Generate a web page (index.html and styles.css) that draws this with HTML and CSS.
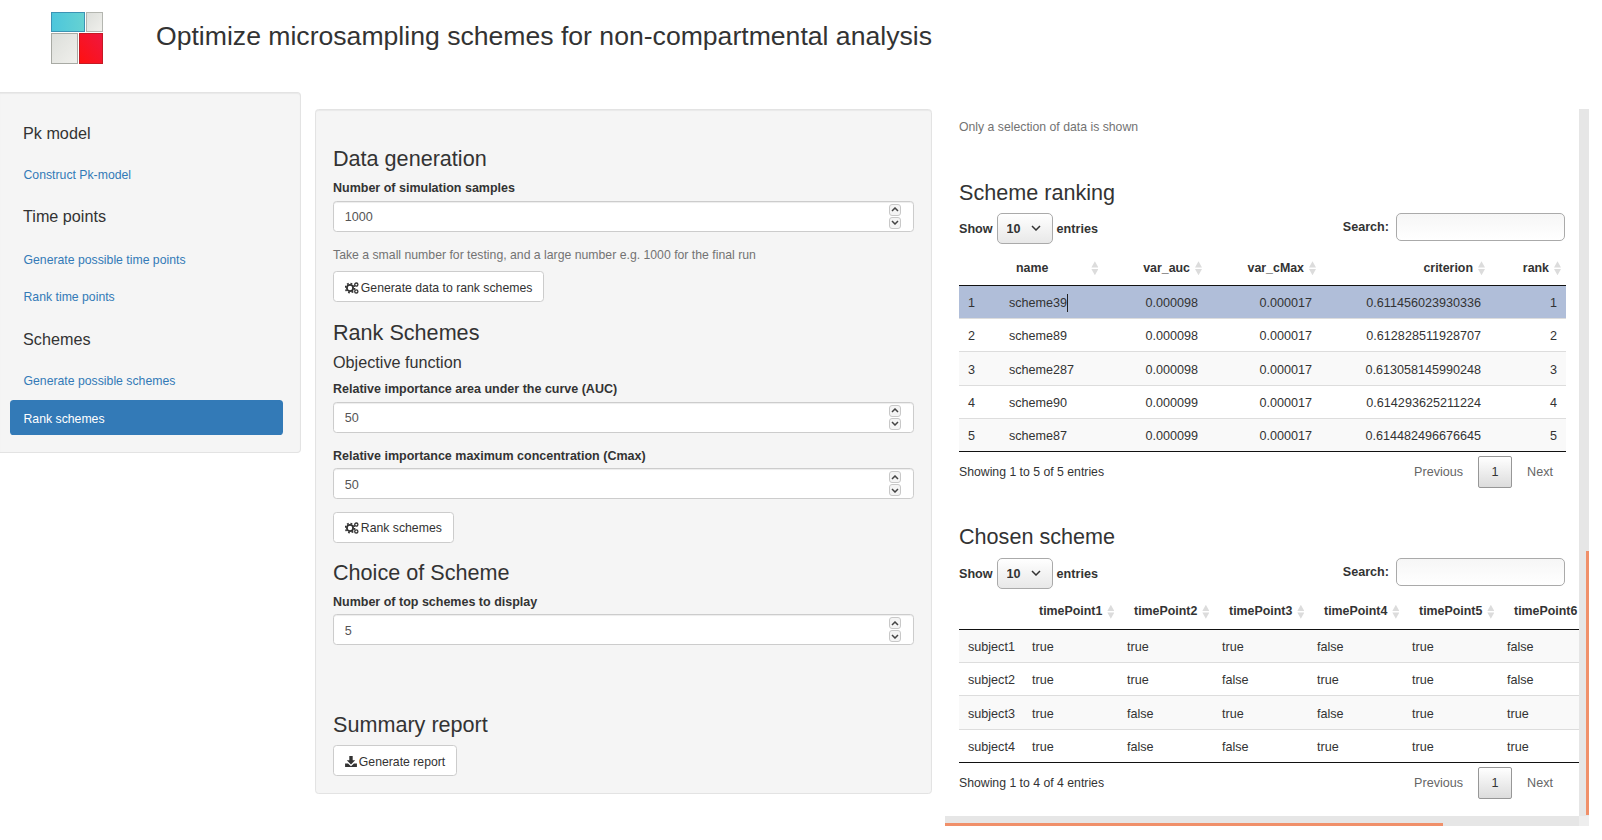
FILE: index.html
```html
<!DOCTYPE html>
<html lang="en">
<head>
    <meta charset="UTF-8">
    <title>Optimize microsampling schemes</title>
    <link rel="stylesheet" href="styles.css">
</head>
<body>
    <!-- Title -->
    <header class="page-header">
        <svg class="logo" width="52" height="52" viewBox="0 0 52 52">
            <defs>
                <linearGradient id="cyan" x1="0" y1="0" x2="1" y2="0"><stop offset="0" stop-color="#4cc6dc"/><stop offset="1" stop-color="#66d2d2"/></linearGradient>
                <linearGradient id="red" x1="0" y1="1" x2="1" y2="0"><stop offset="0" stop-color="#ff1010"/><stop offset="1" stop-color="#ee1840"/></linearGradient>
                <linearGradient id="pale" x1="0" y1="0" x2="1" y2="1"><stop offset="0" stop-color="#dcdeda"/><stop offset="1" stop-color="#f0f0ec"/></linearGradient>
            </defs>
            <rect x="0.5" y="0.5" width="33" height="19" fill="url(#cyan)" stroke="#3c93b4"/>
            <rect x="35.5" y="0.5" width="16" height="19" fill="url(#pale)" stroke="#b4b6b0"/>
            <rect x="0.5" y="21.5" width="26" height="30" fill="url(#pale)" stroke="#a8aaa4"/>
            <rect x="28.5" y="21.5" width="23" height="30" fill="url(#red)" stroke="#c41a24"/>
        </svg>
        <h2 class="page-title">Optimize microsampling schemes for non-compartmental analysis</h2>
    </header>

    <div class="columns">
        <!-- Navigation -->
        <nav class="sidebar">
            <h4 class="nav-title">Pk model</h4>
            <a class="nav-link" href="#">Construct Pk-model</a>
            <h4 class="nav-title middle">Time points</h4>
            <a class="nav-link" href="#">Generate possible time points</a>
            <a class="nav-link" href="#">Rank time points</a>
            <h4 class="nav-title last">Schemes</h4>
            <a class="nav-link" href="#">Generate possible schemes</a>
            <a class="nav-link active" href="#">Rank schemes</a>
        </nav>

        <!-- Settings -->
        <section class="panel">
            <h3 class="first">Data generation</h3>
            <label class="field-label">Number of simulation samples</label>
            <div class="number-field">
                <input type="number" value="1000">
                <div class="spinner">
                    <span class="spin"><svg width="8" height="5" viewBox="0 0 8 5"><path d="M1 4l3-3 3 3" fill="none" stroke="#444" stroke-width="1.5"/></svg></span>
                    <span class="spin"><svg width="8" height="5" viewBox="0 0 8 5"><path d="M1 1l3 3 3-3" fill="none" stroke="#444" stroke-width="1.5"/></svg></span>
                </div>
            </div>
            <p class="help">Take a small number for testing, and a large number e.g. 1000 for the final run</p>
            <button class="btn">
                <svg width="14" height="12" viewBox="0 0 14 12"><circle cx="5" cy="6" r="3.1" fill="none" stroke="#333" stroke-width="1.8"/><circle cx="5" cy="6" r="4.6" fill="none" stroke="#333" stroke-width="1.6" stroke-dasharray="1.8 1.8"/><circle cx="11.3" cy="2.6" r="1.6" fill="none" stroke="#333" stroke-width="1.3"/><circle cx="11.3" cy="9.4" r="1.6" fill="none" stroke="#333" stroke-width="1.3"/></svg>
                Generate data to rank schemes
            </button>

            <h3 class="rank">Rank Schemes</h3>
            <h4 class="sub-title">Objective function</h4>
            <label class="field-label">Relative importance area under the curve (AUC)</label>
            <div class="number-field">
                <input type="number" value="50">
                <div class="spinner">
                    <span class="spin"><svg width="8" height="5" viewBox="0 0 8 5"><path d="M1 4l3-3 3 3" fill="none" stroke="#444" stroke-width="1.5"/></svg></span>
                    <span class="spin"><svg width="8" height="5" viewBox="0 0 8 5"><path d="M1 1l3 3 3-3" fill="none" stroke="#444" stroke-width="1.5"/></svg></span>
                </div>
            </div>
            <label class="field-label next">Relative importance maximum concentration (Cmax)</label>
            <div class="number-field">
                <input type="number" value="50">
                <div class="spinner">
                    <span class="spin"><svg width="8" height="5" viewBox="0 0 8 5"><path d="M1 4l3-3 3 3" fill="none" stroke="#444" stroke-width="1.5"/></svg></span>
                    <span class="spin"><svg width="8" height="5" viewBox="0 0 8 5"><path d="M1 1l3 3 3-3" fill="none" stroke="#444" stroke-width="1.5"/></svg></span>
                </div>
            </div>
            <button class="btn after-field">
                <svg width="14" height="12" viewBox="0 0 14 12"><circle cx="5" cy="6" r="3.1" fill="none" stroke="#333" stroke-width="1.8"/><circle cx="5" cy="6" r="4.6" fill="none" stroke="#333" stroke-width="1.6" stroke-dasharray="1.8 1.8"/><circle cx="11.3" cy="2.6" r="1.6" fill="none" stroke="#333" stroke-width="1.3"/><circle cx="11.3" cy="9.4" r="1.6" fill="none" stroke="#333" stroke-width="1.3"/></svg>
                Rank schemes
            </button>

            <h3>Choice of Scheme</h3>
            <label class="field-label">Number of top schemes to display</label>
            <div class="number-field">
                <input type="number" value="5">
                <div class="spinner">
                    <span class="spin"><svg width="8" height="5" viewBox="0 0 8 5"><path d="M1 4l3-3 3 3" fill="none" stroke="#444" stroke-width="1.5"/></svg></span>
                    <span class="spin"><svg width="8" height="5" viewBox="0 0 8 5"><path d="M1 1l3 3 3-3" fill="none" stroke="#444" stroke-width="1.5"/></svg></span>
                </div>
            </div>

            <h3 class="report">Summary report</h3>
            <button class="btn">
                <svg width="12" height="11" viewBox="0 0 14 13"><path d="M5 0h4v5h3L7 10 2 5h3z" fill="#333"/><path d="M0 9h3.5L7 12l3.5-3H14v4H0z" fill="#333"/></svg>
                Generate report
            </button>
        </section>

        <!-- Results -->
        <section class="results">
            <div class="results-inner">
                <p class="help note">Only a selection of data is shown</p>

                <h3 class="table-title">Scheme ranking</h3>
                <div class="table-controls">
                    <div class="length">
                        Show
                        <div class="select-box">
                            <select><option>10</option></select>
                            <svg width="10" height="6" viewBox="0 0 10 6"><path d="M1 1l4 4 4-4" fill="none" stroke="#333" stroke-width="1.5"/></svg>
                        </div>
                        entries
                    </div>
                    <div class="search">Search: <input type="text"></div>
                </div>
                <table class="data-table ranking">
                    <thead>
                        <tr>
                            <th class="c-id"></th>
                            <th class="c-name">name</th>
                            <th class="c-auc num">var_auc</th>
                            <th class="c-cmax num">var_cMax</th>
                            <th class="c-crit num">criterion</th>
                            <th class="c-rank num">rank</th>
                        </tr>
                    </thead>
                    <tbody>
                        <tr class="selected"><td>1</td><td><span class="caret">scheme39</span></td><td class="num">0.000098</td><td class="num">0.000017</td><td class="num">0.611456023930336</td><td class="num">1</td></tr>
                        <tr><td>2</td><td>scheme89</td><td class="num">0.000098</td><td class="num">0.000017</td><td class="num">0.612828511928707</td><td class="num">2</td></tr>
                        <tr class="odd tall"><td>3</td><td>scheme287</td><td class="num">0.000098</td><td class="num">0.000017</td><td class="num">0.613058145990248</td><td class="num">3</td></tr>
                        <tr><td>4</td><td>scheme90</td><td class="num">0.000099</td><td class="num">0.000017</td><td class="num">0.614293625211224</td><td class="num">4</td></tr>
                        <tr class="odd"><td>5</td><td>scheme87</td><td class="num">0.000099</td><td class="num">0.000017</td><td class="num">0.614482496676645</td><td class="num">5</td></tr>
                    </tbody>
                </table>
                <div class="table-footer">
                    <span>Showing 1 to 5 of 5 entries</span>
                    <div class="pager"><span>Previous</span><span class="page-current">1</span><span>Next</span></div>
                </div>

                <h3 class="table-title second">Chosen scheme</h3>
                <div class="table-controls">
                    <div class="length">
                        Show
                        <div class="select-box">
                            <select><option>10</option></select>
                            <svg width="10" height="6" viewBox="0 0 10 6"><path d="M1 1l4 4 4-4" fill="none" stroke="#333" stroke-width="1.5"/></svg>
                        </div>
                        entries
                    </div>
                    <div class="search">Search: <input type="text"></div>
                </div>
                <div class="table-clip">
                    <table class="data-table chosen">
                        <thead>
                            <tr>
                                <th class="c-subject"></th>
                                <th>timePoint1</th>
                                <th>timePoint2</th>
                                <th>timePoint3</th>
                                <th>timePoint4</th>
                                <th>timePoint5</th>
                                <th class="no-sort">timePoint6</th>
                            </tr>
                        </thead>
                        <tbody>
                            <tr class="odd"><td>subject1</td><td>true</td><td>true</td><td>true</td><td>false</td><td>true</td><td>false</td></tr>
                            <tr><td>subject2</td><td>true</td><td>true</td><td>false</td><td>true</td><td>true</td><td>false</td></tr>
                            <tr class="odd tall"><td>subject3</td><td>true</td><td>false</td><td>true</td><td>false</td><td>true</td><td>true</td></tr>
                            <tr><td>subject4</td><td>true</td><td>false</td><td>false</td><td>true</td><td>true</td><td>true</td></tr>
                        </tbody>
                    </table>
                </div>
                <div class="table-footer">
                    <span>Showing 1 to 4 of 4 entries</span>
                    <div class="pager"><span>Previous</span><span class="page-current">1</span><span>Next</span></div>
                </div>
            </div>

            <!-- Scrollbars -->
            <div class="track-v"><div class="thumb-v"></div></div>
            <div class="track-h"><div class="thumb-h"></div></div>
            <div class="track-corner"></div>
        </section>
    </div>
</body>
</html>
```

FILE: styles.css
```css
html, body {
    height: 100%;
}

body {
    margin: 0;
    background: #fff;
    color: #333;
    font-family: "Liberation Sans", Arial, sans-serif;
    font-size: 12.25px;
    line-height: 18px;
    overflow: hidden;
}

/* Header */
.page-header {
    display: flex;
    align-items: flex-start;
    height: 92px;
    padding: 12px 0 0 51px;
    box-sizing: border-box;
}

.page-title {
    margin: 7px 0 0 53px;
    font-size: 26.6px;
    font-weight: 500;
    line-height: 35px;
}

.columns {
    display: flex;
    align-items: flex-start;
}

/* Sidebar */
.sidebar {
    display: flex;
    flex-direction: column;
    width: 301px;
    height: 361px;
    box-sizing: border-box;
    padding: 31px 17px 0 10px;
    background: #f5f5f5;
    border: 1px solid #e3e3e3;
    border-left: 0;
    border-radius: 0 4px 4px 0;
    box-shadow: inset 0 1px 1px rgba(0,0,0,0.05);
}

.nav-title {
    margin: 0 0 15px 13px;
    font-size: 16.2px;
    font-weight: 500;
    line-height: 18px;
}

.nav-link {
    display: block;
    height: 36px;
    box-sizing: border-box;
    padding: 9px 13.5px;
    margin-bottom: 1px;
    color: #337ab7;
    text-decoration: none;
    border-radius: 3.6px;
}

.nav-link + .nav-title.middle {
    margin-top: 13px;
    margin-bottom: 17px;
}

.nav-link + .nav-title.last {
    margin-top: 14px;
}

.nav-link.active {
    height: 35px;
    padding-top: 9.5px;
    background: #337ab7;
    color: #fff;
}

/* Settings panel */
.panel {
    width: 617px;
    height: 685px;
    box-sizing: border-box;
    margin: 17px 0 0 14px;
    padding: 18px 17px;
    background: #f5f5f5;
    border: 1px solid #e3e3e3;
    border-radius: 3.6px;
    box-shadow: inset 0 1px 1px rgba(0,0,0,0.05);
}

h3 {
    margin: 18px 0 8px;
    font-size: 21.6px;
    font-weight: 500;
    line-height: 24px;
}

h3.first {
    margin-top: 19px;
}

h3.rank {
    margin-top: 19px;
}

h3.report {
    margin-top: 68px;
    margin-bottom: 8px;
}

.sub-title {
    margin: 0 0 9px;
    font-size: 16.2px;
    font-weight: 500;
    line-height: 18px;
}

.field-label {
    display: block;
    margin-bottom: 3.5px;
    font-size: 12.5px;
    font-weight: bold;
}

.field-label.next {
    margin-top: 14.5px;
    margin-bottom: 3px;
}

.number-field {
    position: relative;
}

.number-field input {
    display: block;
    width: 100%;
    height: 31px;
    box-sizing: border-box;
    padding: 2px 10.8px 0;
    background: #fff;
    border: 1px solid #ccc;
    border-radius: 3.6px;
    color: #555;
    font: inherit;
    font-size: 12.6px;
    appearance: textfield;
    box-shadow: inset 0 1px 1px rgba(0,0,0,0.075);
}

.spinner {
    position: absolute;
    top: 3px;
    right: 13px;
    display: flex;
    flex-direction: column;
    gap: 1px;
}

.spin {
    display: flex;
    align-items: center;
    justify-content: center;
    width: 12px;
    height: 12px;
    border: 1px solid #c8c8c8;
    border-radius: 3px;
    box-sizing: border-box;
    background: #f4f4f4;
}

.help {
    margin: 14.5px 0 7px;
    color: #737373;
}

.btn {
    display: inline-flex;
    align-items: center;
    gap: 2px;
    height: 31px;
    box-sizing: border-box;
    padding: 2px 10.8px 0;
    background: #fff;
    border: 1px solid #ccc;
    border-radius: 3.6px;
    color: #333;
    font: inherit;
}

.btn.after-field {
    margin-top: 12.5px;
}

/* Results */
.results {
    position: relative;
    width: 644px;
    height: 717px;
    margin: 17px 0 0 13px;
    overflow: hidden;
}

.results-inner {
    width: 620px;
    padding: 9px 0 0 14px;
}

.note {
    margin: 0;
}

.table-title {
    margin: 45px 0 8px;
}

.table-title.second {
    margin: 37px 0 9px;
}

.table-controls {
    display: flex;
    justify-content: space-between;
    align-items: center;
    width: 606px;
    height: 31px;
    margin-bottom: 8px;
    font-size: 12.6px;
    font-weight: bold;
}

.table-controls .length {
    display: flex;
    align-items: center;
    gap: 4px;
}

.select-box {
    position: relative;
    height: 31px;
}

.select-box select {
    width: 56px;
    height: 31px;
    padding: 0 9px;
    appearance: none;
    background: linear-gradient(#fff, #e8e8e8);
    border: 1px solid #aaa;
    border-radius: 5px;
    color: #333;
    font: inherit;
}

.select-box svg {
    position: absolute;
    top: 12px;
    right: 12px;
}

.search {
    display: flex;
    align-items: center;
    gap: 7px;
    margin-top: -3px;
}

.search input {
    width: 169px;
    height: 28px;
    box-sizing: border-box;
    background: linear-gradient(#f6f6f6, #fff);
    border: 1px solid #aaa;
    border-radius: 5px;
}

.data-table {
    border-collapse: separate;
    border-spacing: 0;
    table-layout: fixed;
}

.data-table th {
    height: 34px;
    box-sizing: border-box;
    padding: 0 16px 2px;
    border-bottom: 1px solid #111;
    font-size: 12.4px;
    font-weight: bold;
    text-align: left;
    white-space: nowrap;
}

.data-table th:not(:empty):not(.no-sort)::after {
    content: "";
    display: inline-block;
    width: 7px;
    height: 14px;
    margin-left: 5px;
    vertical-align: middle;
    background: #dcdcdc;
    clip-path: polygon(0 44%, 50% 0, 100% 44%, 0 44%, 0 56%, 100% 56%, 50% 100%, 0 56%);
}

.data-table td {
    height: 33px;
    box-sizing: border-box;
    padding: 2px 9px 0;
    border-bottom: 1px solid #ddd;
    font-size: 12.6px;
    white-space: nowrap;
}

.data-table tr.tall td {
    height: 34px;
    padding-top: 3px;
}

.data-table tbody tr:last-child td {
    border-bottom-color: #111;
}

.data-table tr.odd td {
    background: #f9f9f9;
}

.data-table .num {
    text-align: right;
}

.ranking {
    width: 607px;
}

.c-id { width: 41px; }
.c-name { width: 102px; }
.c-auc { width: 105px; }
.c-cmax { width: 114px; }
.c-crit { width: 169px; }
.c-rank { width: 76px; }

.data-table th.c-name {
    padding-right: 0;
}

.data-table th.c-name:not(:empty):not(.no-sort)::after {
    margin-left: 43px;
}

.data-table th.c-auc,
.data-table th.c-cmax,
.data-table th.c-crit,
.data-table th.c-rank {
    padding-right: 5px;
}

.data-table .selected td {
    background: #b0bed9;
}

.caret {
    border-right: 1px solid #222;
    padding: 2px 0;
}

.table-clip {
    width: 620px;
    overflow: hidden;
}

.chosen {
    width: 634px;
    margin-top: -1px;
}

.chosen th {
    padding-bottom: 3px;
}

.chosen th,
.chosen td {
    width: 95px;
}

.chosen .c-subject {
    width: 64px;
}

.table-footer {
    display: flex;
    justify-content: space-between;
    align-items: center;
    width: 607px;
    height: 32px;
    margin-top: 4px;
}

.pager {
    display: flex;
    align-items: center;
    gap: 15px;
    padding-right: 13px;
    color: #666;
    font-size: 12.6px;
}

.page-current {
    display: flex;
    align-items: center;
    justify-content: center;
    width: 34px;
    height: 32px;
    box-sizing: border-box;
    background: linear-gradient(#fff, #dcdcdc);
    border: 1px solid #979797;
    border-radius: 2px;
    color: #333;
}

/* Scrollbars of the results pane */
.track-v {
    position: absolute;
    top: 0;
    right: 0;
    bottom: 10px;
    width: 10px;
    background: #e6e6e6;
}

.thumb-v {
    position: absolute;
    right: 0;
    bottom: 1px;
    width: 3px;
    height: 264px;
    background: #f0906a;
}

.track-h {
    position: absolute;
    left: 0;
    right: 10px;
    bottom: 0;
    height: 10px;
    background: #e6e6e6;
}

.thumb-h {
    position: absolute;
    left: 0;
    bottom: 0;
    width: 498px;
    height: 3px;
    background: #f0906a;
}

.track-corner {
    position: absolute;
    right: 0;
    bottom: 0;
    width: 10px;
    height: 10px;
    background: #eee;
}
```
